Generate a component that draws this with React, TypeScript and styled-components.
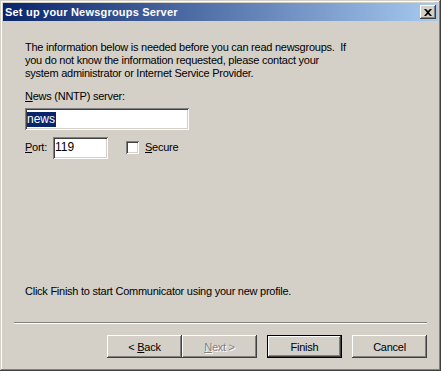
import React from "react";
import styled, { createGlobalStyle, css } from "styled-components";

const Global = createGlobalStyle`
  html, body {
    margin: 0;
    padding: 0;
    background: #d4d0c8;
  }
  * {
    box-sizing: border-box;
  }
`;

const Window = styled.div`
  width: 441px;
  height: 371px;
  background: #d4d0c8;
  padding: 3px;
  display: flex;
  flex-direction: column;
  font-family: "Liberation Sans", Arial, sans-serif;
  font-size: 11px;
  letter-spacing: -0.25px;
  color: #000;
  box-shadow: inset -1px -1px 0 #404040, inset 1px 1px 0 #d4d0c8,
    inset -2px -2px 0 #808080, inset 2px 2px 0 #ffffff;
`;

const TitleBar = styled.div`
  height: 18px;
  flex: none;
  display: flex;
  align-items: center;
  justify-content: space-between;
  padding: 0 2px 0 2px;
  background: linear-gradient(to right, #0a246a, #a6caf0);
`;

const Title = styled.span`
  color: #fff;
  font-family: "Liberation Sans", Arial, sans-serif;
  font-weight: bold;
  font-size: 11px;
  letter-spacing: 0.2px;
`;

const CloseBox = styled.div`
  width: 16px;
  height: 14px;
  background: #d4d0c8;
  display: flex;
  align-items: center;
  justify-content: center;
  box-shadow: inset -1px -1px 0 #404040, inset 1px 1px 0 #ffffff,
    inset -2px -2px 0 #808080;
`;

const Body = styled.div`
  flex: 1;
  display: flex;
  flex-direction: column;
  padding: 20px 11px 10px 11px;
`;

const Content = styled.div`
  padding-left: 11px;
  display: flex;
  flex-direction: column;
  line-height: 13px;
`;

const Para = styled.p`
  margin: 0;
  white-space: nowrap;
`;

const Label = styled.div`
  margin-top: 10px;
  margin-bottom: 5px;
`;

const U = styled.span`
  text-decoration: underline;
  text-underline-offset: 1px;
`;

const Field = styled.div<{ $w: number }>`
  width: ${(p) => p.$w}px;
  height: 22px;
  background: #fff;
  padding: 3px 2px;
  display: flex;
  align-items: center;
  font-size: 12px;
  letter-spacing: 0;
  box-shadow: inset 1px 1px 0 #808080, inset -1px -1px 0 #ffffff,
    inset 2px 2px 0 #404040, inset -2px -2px 0 #d4d0c8;
`;

const Selected = styled.span`
  background: #0a246a;
  color: #fff;
  line-height: 15px;
  padding-right: 1px;
`;

const PortRow = styled.div`
  margin-top: 7px;
  display: flex;
  align-items: center;
  height: 21px;
`;

const PortLabel = styled.span`
  width: 28px;
`;

const Check = styled.span`
  width: 13px;
  height: 13px;
  margin-left: 18px;
  margin-right: 6px;
  background: #fff;
  box-shadow: inset 1px 1px 0 #808080, inset -1px -1px 0 #ffffff,
    inset 2px 2px 0 #404040, inset -2px -2px 0 #d4d0c8;
`;

const Spacer = styled.div`
  flex: 1;
`;

const Footer = styled.div`
  padding-left: 11px;
  line-height: 13px;
  margin-bottom: 24px;
`;

const Separator = styled.div`
  height: 2px;
  border-top: 1px solid #808080;
  border-bottom: 1px solid #ffffff;
`;

const Buttons = styled.div`
  margin-top: 11px;
  display: flex;
  justify-content: flex-end;
`;

const Button = styled.div<{ $default?: boolean; $disabled?: boolean; $gap?: number }>`
  width: 75px;
  height: 23px;
  margin-left: ${(p) => p.$gap ?? 0}px;
  display: flex;
  align-items: center;
  justify-content: center;
  background: #d4d0c8;
  box-shadow: inset -1px -1px 0 #404040, inset 1px 1px 0 #ffffff,
    inset -2px -2px 0 #808080;
  ${(p) =>
    p.$default &&
    css`
      box-shadow: inset 0 0 0 1px #000, inset -2px -2px 0 #404040,
        inset 2px 2px 0 #ffffff, inset -3px -3px 0 #808080;
    `}
  ${(p) =>
    p.$disabled &&
    css`
      color: #808080;
      text-shadow: 1px 1px 0 #ffffff;
    `}
`;

export default function App() {
  return (
    <>
      <Global />
      <Window>
        <TitleBar>
          <Title>Set up your Newsgroups Server</Title>
          <CloseBox>
            <svg width="8" height="7" viewBox="0 0 8 7">
              <path d="M0 0h2l2 2 2-2h2L5 3.5 8 7H6L4 5 2 7H0l3-3.5z" fill="#000" />
            </svg>
          </CloseBox>
        </TitleBar>
        <Body>
          <Content>
            <Para>
              The information below is needed before you can read newsgroups.&nbsp; If
              <br />
              you do not know the information requested, please contact your
              <br />
              system administrator or Internet Service Provider.
            </Para>
            <Label>
              <U>N</U>ews (NNTP) server:
            </Label>
            <Field $w={164}>
              <Selected>news</Selected>
            </Field>
            <PortRow>
              <PortLabel>
                <U>P</U>ort:
              </PortLabel>
              <Field $w={55}>119</Field>
              <Check />
              <span>
                <U>S</U>ecure
              </span>
            </PortRow>
          </Content>
          <Spacer />
          <Footer>Click Finish to start Communicator using your new profile.</Footer>
          <Separator />
          <Buttons>
            <Button>
              <span>
                &lt;&nbsp;<U>B</U>ack
              </span>
            </Button>
            <Button $disabled>
              <span>
                <U>N</U>ext&nbsp;&gt;
              </span>
            </Button>
            <Button $default $gap={10}>
              Finish
            </Button>
            <Button $gap={10}>Cancel</Button>
          </Buttons>
        </Body>
      </Window>
    </>
  );
}
